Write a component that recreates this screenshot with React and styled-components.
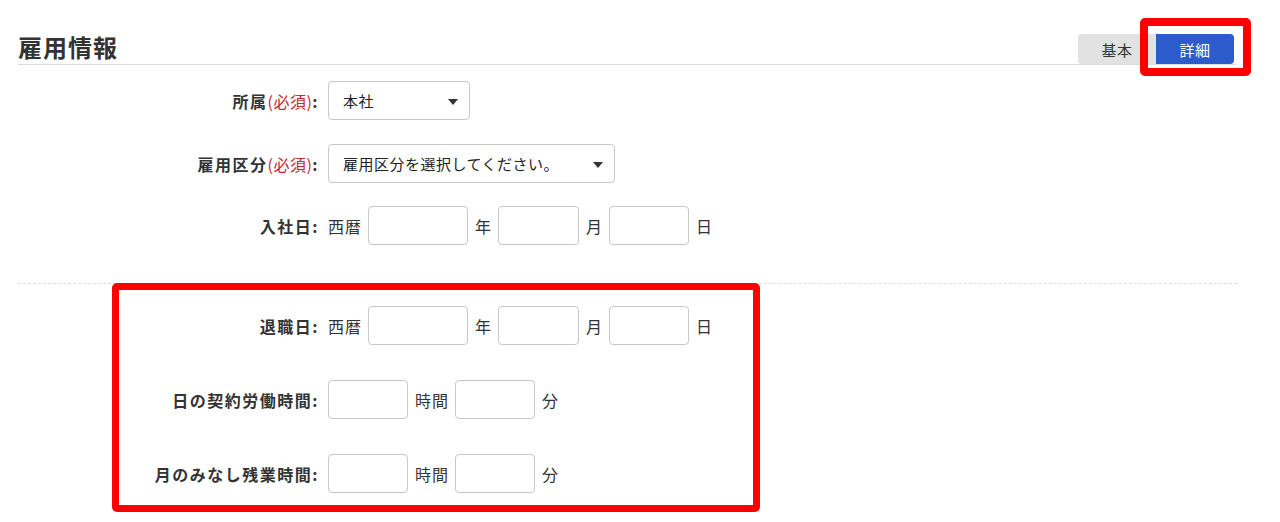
import React from "react";
import styled, { createGlobalStyle } from "styled-components";

const GlobalStyle = createGlobalStyle`
  body {
    margin: 0;
    background: #fff;
    color: #333;
    font-family: "Noto Sans CJK JP", "Noto Sans", sans-serif;
  }
  * {
    box-sizing: border-box;
  }
`;

const Page = styled.div`
  position: relative;
  width: 1280px;
  height: 522px;
  padding: 30px 43px 0 18px;
`;

const Header = styled.div`
  display: flex;
  align-items: flex-end;
  justify-content: space-between;
  border-bottom: 1px solid #dcdcdc;
`;

const Title = styled.h2`
  margin: 0;
  font-size: 24px;
  letter-spacing: 1px;
  line-height: 34px;
  font-weight: 700;
  color: #333;
`;

const ViewToggle = styled.div`
  display: flex;
  margin-right: 3px;
`;

const ToggleButton = styled.button`
  width: 78px;
  height: 30px;
  border: none;
  padding: 0;
  font-family: inherit;
  font-size: 15px;
  letter-spacing: 0.5px;
  cursor: pointer;
  background: ${(p) => (p.$active ? "#2c5ccc" : "#e2e2e2")};
  color: ${(p) => (p.$active ? "#fff" : "#333")};
  border-radius: ${(p) => (p.$active ? "0 4px 4px 0" : "4px 0 0 4px")};
`;

const Row = styled.div`
  display: grid;
  grid-template-columns: 300px 1fr;
  column-gap: 10px;
  align-items: center;
  margin-top: ${(p) => p.$gap}px;
`;

const Label = styled.div`
  text-align: right;
  font-size: 16px;
  letter-spacing: 1.5px;
  margin-right: -1px;
  font-weight: 700;
  color: #333;
`;

const Required = styled.span`
  font-weight: 400;
  letter-spacing: 0.5px;
  color: #c8283c;
`;

const Fields = styled.div`
  display: flex;
  align-items: center;
  gap: 6px;
`;

const Unit = styled.span`
  font-size: 16px;
  letter-spacing: 1px;
  color: #333;
  margin-left: ${(p) => (p.$first ? 0 : 1)}px;
`;

const Input = styled.input`
  width: ${(p) => p.$w}px;
  height: 39px;
  border: 1px solid #c8c8c8;
  border-radius: 4px;
  font-family: inherit;
  font-size: 15px;
  padding: 0 8px;
`;

const Select = styled.div`
  position: relative;
  width: ${(p) => p.$w}px;
  height: 39px;
  border: 1px solid #c8c8c8;
  border-radius: 4px;
  padding: 0 30px 0 14px;
  display: flex;
  align-items: center;
  font-size: 15px;
  letter-spacing: 0.5px;
  color: #222;

  &::after {
    content: "";
    position: absolute;
    right: 11px;
    top: 17px;
    border-left: 5px solid transparent;
    border-right: 5px solid transparent;
    border-top: 6px solid #333;
  }
`;

const Divider = styled.hr`
  margin: 38px 0 0;
  border: none;
  border-top: 1px dashed #dedede;
`;

const Highlight = styled.div`
  position: absolute;
  left: ${(p) => p.$x}px;
  top: ${(p) => p.$y}px;
  width: ${(p) => p.$w}px;
  height: ${(p) => p.$h}px;
  border: ${(p) => p.$t}px solid #ff0000;
  border-radius: 5px;
  pointer-events: none;
`;

const DateFields = () => (
  <Fields>
    <Unit $first>西暦</Unit>
    <Input $w={100} />
    <Unit>年</Unit>
    <Input $w={81} />
    <Unit>月</Unit>
    <Input $w={80} />
    <Unit>日</Unit>
  </Fields>
);

const TimeFields = () => (
  <Fields>
    <Input $w={80} />
    <Unit>時間</Unit>
    <Input $w={80} />
    <Unit>分</Unit>
  </Fields>
);

export default function App() {
  return (
    <>
      <GlobalStyle />
      <Page>
        <Header>
          <Title>雇用情報</Title>
          <ViewToggle>
            <ToggleButton>基本</ToggleButton>
            <ToggleButton $active>詳細</ToggleButton>
          </ViewToggle>
        </Header>

        <Row $gap={16}>
          <Label>
            所属<Required>(必須)</Required>:
          </Label>
          <Select $w={142}>本社</Select>
        </Row>
        <Row $gap={24}>
          <Label>
            雇用区分<Required>(必須)</Required>:
          </Label>
          <Select $w={287}>雇用区分を選択してください。</Select>
        </Row>
        <Row $gap={23}>
          <Label>入社日:</Label>
          <DateFields />
        </Row>

        <Divider />

        <Row $gap={22}>
          <Label>退職日:</Label>
          <DateFields />
        </Row>
        <Row $gap={35}>
          <Label>日の契約労働時間:</Label>
          <TimeFields />
        </Row>
        <Row $gap={35}>
          <Label>月のみなし残業時間:</Label>
          <TimeFields />
        </Row>

        <Highlight $x={1140} $y={18} $w={111} $h={58} $t={8} />
        <Highlight $x={112} $y={283} $w={648} $h={229} $t={7} />
      </Page>
    </>
  );
}
